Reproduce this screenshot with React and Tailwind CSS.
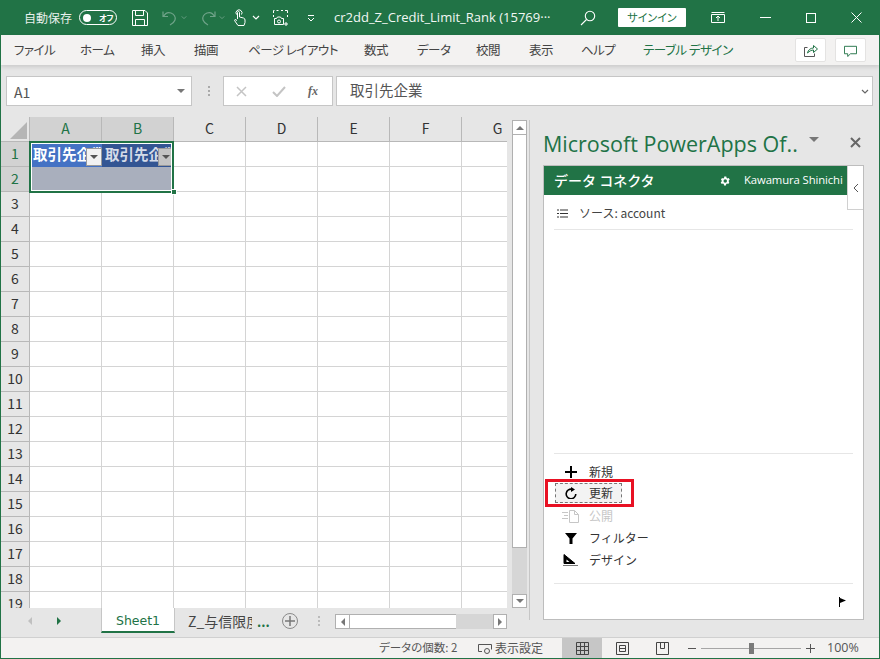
import React from "react"

const tabs = [
  { name: "ファイル", w: "w-[66px]" },
  { name: "ホーム", w: "w-[61px]" },
  { name: "挿入", w: "w-[53px]" },
  { name: "描画", w: "w-[54px]" },
  { name: "ページ レイアウト", w: "w-[116px]" },
  { name: "数式", w: "w-[53px]" },
  { name: "データ", w: "w-[59px]" },
  { name: "校閲", w: "w-[53px]" },
  { name: "表示", w: "w-[52px]" },
  { name: "ヘルプ", w: "w-[62px]" },
]

const cols = ["A", "B", "C", "D", "E", "F", "G"]
const rows = Array.from({ length: 19 }, (_, i) => i + 1)

const Chevron = ({ className = "" }) => (
  <svg viewBox="0 0 8 5" className={`w-2 h-[5px] ${className}`} fill="none" stroke="currentColor" strokeWidth="1.2">
    <path d="M1 1l3 3 3-3" />
  </svg>
)

const TitleBar = () => (
  <div className="h-[35px] shrink-0 bg-[#217346] flex items-center text-white text-[12px]">
    <span className="ml-[23px] w-[55px] text-[#e8f0ec]">自動保存</span>
    <div className="w-[38px] h-[15px] rounded-full border border-white flex items-center pl-[3px]">
      <span className="w-[8px] h-[8px] rounded-full bg-white" />
      <span className="ml-[8px] text-[8px] leading-none font-bold [font-feature-settings:'palt']">オフ</span>
    </div>
    <svg viewBox="0 0 16 16" className="ml-[15px] w-4 h-4" fill="none" stroke="#fff">
      <path d="M.5.5h12.5l2.5 2.5v12.500H.5zM3.500.5v5h8v-5M3.500 15.500v-6h9v6" />
    </svg>
    <svg viewBox="0 0 16 16" className="ml-[14px] w-4 h-4 text-[#6fa389]" fill="none" stroke="currentColor" strokeWidth="1.2">
      <path d="M1 1.500v5h5M1.500 6.500C3 3.500 6 2 9 3c3 1 5 4 4 7s-3 4-5 5" />
    </svg>
    <Chevron className="ml-[3px] text-[#6fa389] w-[6px]" />
    <svg viewBox="0 0 16 16" className="ml-[13px] w-4 h-4 text-[#6fa389]" fill="none" stroke="currentColor" strokeWidth="1.2">
      <path d="M15 1.500v5h-5M14.500 6.500C13 3.500 10 2 7 3 4 4 2 7 3 10s3 4 5 5" />
    </svg>
    <Chevron className="ml-[3px] text-[#6fa389] w-[6px]" />
    <svg viewBox="0 0 12 17" className="ml-[9px] w-3 h-[17px]" fill="none" stroke="#fff" strokeWidth="1">
      <path d="M2.500 5.500a3 3 0 1 1 5 0M3.500 10V3.500a1 1 0 0 1 2 0V8l4 1c1 .3 1.500 1 1.500 2v2.500l-1 3h-6l-3.500-5 .5-1 2 1" />
    </svg>
    <Chevron className="ml-[6px]" />
    <svg viewBox="0 0 16 16" className="ml-[13px] w-4 h-4" fill="none" stroke="#fff">
      <path d="M3.500.5h2M8 .5h2M12 .5h2.500v2.500M14.500 5v2M.5 3V.5h1M.5 5v2" />
      <path d="M1.500 8.500h2l1-1.500h3l1 1.500h2v6h-9z" />
      <circle cx="6" cy="11.500" r="1.500" />
      <path d="M13 12v4M11 14h4" />
    </svg>
    <svg viewBox="0 0 8 8" className="ml-[18px] w-2 h-2" fill="none" stroke="#fff">
      <path d="M1 1.500h6M1 4l3 3 3-3" />
    </svg>
    <span className="ml-[19px] w-[226px] whitespace-nowrap text-[13px] text-[#f2f7f4] [font-family:'Open_Sans','Noto_Sans_CJK_JP',sans-serif]">cr2dd_Z_Credit_Limit_Rank (15769···</span>
    <svg viewBox="0 0 16 16" className="ml-[20px] w-4 h-4" fill="none" stroke="#fff" strokeWidth="1.100">
      <circle cx="10" cy="6" r="4.700" />
      <path d="M6.500 9.500L1 15" />
    </svg>
    <div className="ml-[22px] w-[68px] h-[19px] rounded-[1px] bg-white text-[#217346] flex items-center justify-center text-[11px] [font-feature-settings:'palt']">サインイン</div>
    <svg viewBox="0 0 14 11" className="ml-[25px] w-[14px] h-[11px]" fill="none" stroke="#fff">
      <path d="M.5 2.500h13v8H.5zM.5.500h13M7 9V4.500M5 6l2-2 2 2" />
    </svg>
    <div className="ml-[35px] w-[11px] h-px bg-white" />
    <div className="ml-[35px] w-[10px] h-[10px] border border-white" />
    <svg viewBox="0 0 11 11" className="ml-[35px] w-[11px] h-[11px]" fill="none" stroke="#fff">
      <path d="M.5.500l10 10M10.500.500l-10 10" />
    </svg>
  </div>
)

const RibbonTabs = () => (
  <div className="h-[30px] shrink-0 bg-[#f3f2f1] flex items-center text-[#444] text-[12.500px] tracking-[-0.5px] [font-feature-settings:'palt'] pl-[13px] shadow-[0_2px_4px_rgba(0,0,0,0.12)] relative">
    {tabs.map((t) => (
      <span key={t.name} className={`${t.w} whitespace-nowrap`}>{t.name}</span>
    ))}
    <span className="text-[#217346] w-[152px] whitespace-nowrap">テーブル デザイン</span>
    <div className="w-[31px] h-[24px] rounded-[2px] bg-white border border-[#e4e3e2] flex items-center justify-center">
      <svg viewBox="0 0 14 14" className="w-[14px] h-[14px]" fill="none" stroke="#217346">
        <path d="M3.500 4.500H.5v9h10v-3" stroke="#555" />
        <path d="M3.500 10c.5-3 3-5 6-5V2.500l4 3.500-4 3.500V7c-2 0-4 1-6 3z" />
      </svg>
    </div>
    <div className="ml-[9px] w-[31px] h-[24px] rounded-[2px] bg-white border border-[#e4e3e2] flex items-center justify-center">
      <svg viewBox="0 0 14 14" className="w-[13px] h-[13px]" fill="none" stroke="#217346">
        <path d="M.5 2.500h13v8H7l-3 3v-3H.5z" />
      </svg>
    </div>
  </div>
)

const FormulaBar = () => (
  <div className="h-[52px] shrink-0 bg-[#e6e6e6] flex items-start pt-[11px] pl-[5px]">
    <div className="w-[186px] h-[30px] bg-white border border-[#c6c6c6] flex items-center justify-between pl-[7px] pr-[6px] text-[14px] text-[#555]">
      <span className="pt-[3px]">A1</span>
      <span className="w-0 h-0 border-x-[4px] border-x-transparent border-t-[4px] border-t-[#777]" />
    </div>
    <div className="ml-[15px] w-[3px] h-[30px] flex flex-col justify-center gap-[2px] items-center">
      <span className="w-[2px] h-[2px] bg-[#aaa]" />
      <span className="w-[2px] h-[2px] bg-[#aaa]" />
      <span className="w-[2px] h-[2px] bg-[#aaa]" />
    </div>
    <div className="ml-[13px] w-[110px] h-[30px] bg-white border border-[#c6c6c6] flex items-center pl-[12px]">
      <svg viewBox="0 0 11 11" className="w-[11px] h-[11px]" fill="none" stroke="#c4c4c4" strokeWidth="1.500">
        <path d="M1 1l9 9M10 1l-9 9" />
      </svg>
      <svg viewBox="0 0 14 11" className="ml-[25px] w-[14px] h-[11px]" fill="none" stroke="#c4c4c4" strokeWidth="2">
        <path d="M1 6l4 4 8-9" />
      </svg>
      <span className="ml-[22px] text-[12px] leading-none italic font-bold text-[#666] [font-family:'Liberation_Serif',serif]">fx</span>
    </div>
    <div className="ml-[3px] w-[537px] h-[30px] bg-white border border-[#c6c6c6] flex items-center justify-between pl-[13px] pr-[3px] text-[14.500px] text-[#555]">
      <span className="pb-[3px]">取引先企業</span>
      <Chevron className="text-[#666]" />
    </div>
  </div>
)

const HeaderCell = ({ fill, color, button }) => (
  <div className={`${fill} ${color} flex items-center pl-[3px] pb-[2px] overflow-hidden font-bold text-[14.500px] whitespace-nowrap relative`}>
    取引先企業
    <span className={`absolute right-0 bottom-px w-[16px] h-[18px] ${button} border border-[#9a9a9a] flex items-center justify-center`}>
      <span className="w-0 h-0 border-x-[4px] border-x-transparent border-t-[4px] border-t-[#555]" />
    </span>
  </div>
)

const Sheet = () => (
  <div className="relative w-[506px] h-[491px] overflow-hidden bg-white">
    <div className="grid grid-cols-[29px_repeat(7,72px)] grid-rows-[25px] auto-rows-[25px] w-[533px] text-[#444]">
      <div className="bg-[#e6e6e6] border-r border-b border-[#b8b8b8] flex items-end justify-end p-[2px]">
        <span className="w-0 h-0 border-l-[17px] border-l-transparent border-b-[17px] border-b-[#b5b5b5]" />
      </div>
      {cols.map((c, i) => (
        <div
          key={c}
          className={`border-r border-b border-[#b8b8b8] flex items-center justify-center pb-px text-[14px] ${i < 2 ? "bg-[#d2d2d2] text-[#217346]" : "bg-[#e6e6e6] text-[#333]"}`}
        >
          {c}
        </div>
      ))}
      {rows.map((r) => (
        <React.Fragment key={r}>
          <div className={`border-r border-b border-[#b8b8b8] flex items-center justify-center pb-px text-[14px] ${r < 3 ? "bg-[#d2d2d2] text-[#217346]" : "bg-[#e6e6e6] text-[#333]"}`}>
            {r}
          </div>
          {cols.map((c, i) => {
            if (r === 1 && i === 0) {
              return <HeaderCell key={c} fill="bg-[#4472c4]" color="text-white" button="bg-[#f2f2f2]" />
            }
            if (r === 1 && i === 1) {
              return <HeaderCell key={c} fill="bg-[#335593]" color="text-[#d5dbe8]" button="bg-[#c4c4c4]" />
            }
            if (r === 2 && i < 2) {
              return <div key={c} className="bg-[#a9afbd]" />
            }
            return <div key={c} className="border-r border-b border-[#d4d4d4]" />
          })}
        </React.Fragment>
      ))}
    </div>
    <div className="absolute left-[28px] top-[24px] w-[145px] h-[52px] border-2 border-[#217346] pointer-events-none">
      <div className="w-full h-full border border-white" />
    </div>
    <div className="absolute left-[170px] top-[72px] w-[6px] h-[6px] bg-[#217346] border border-white" />
  </div>
)

const VerticalScroll = () => (
  <div className="ml-[5px] mt-[3px] w-[15px] h-[488px] flex flex-col bg-[#d6d6d6]">
    <div className="h-[15px] bg-white border border-[#b0b0b0] flex items-center justify-center">
      <span className="w-0 h-0 border-x-[4px] border-x-transparent border-b-[4px] border-b-[#777]" />
    </div>
    <div className="h-[413px] bg-white border-x border-b border-[#b0b0b0]" />
    <div className="flex-1" />
    <div className="h-[14px] bg-white border border-[#b0b0b0] flex items-center justify-center">
      <span className="w-0 h-0 border-x-[4px] border-x-transparent border-t-[4px] border-t-[#777]" />
    </div>
  </div>
)

const SheetTabs = () => (
  <div className="h-[28px] flex items-start bg-[#e6e6e6] text-[14px]">
    <div className="w-[100px] h-[25px] flex items-center pl-[27px]">
      <span className="w-0 h-0 border-y-[4px] border-y-transparent border-r-[4px] border-r-[#c0c0c0]" />
      <span className="ml-[25px] w-0 h-0 border-y-[4px] border-y-transparent border-l-[4px] border-l-[#217346]" />
    </div>
    <div className="w-[74px] h-[25px] pt-[4px] bg-white border-b-2 border-[#217346] border-x border-x-[#c6c6c6] flex items-center justify-center text-[#217346] [font-family:'DejaVu_Sans','Noto_Sans_CJK_JP',sans-serif] text-[12.500px]">Sheet1</div>
    <div className="ml-[13px] w-[64px] h-[25px] pt-[2px] flex items-center text-[#444] whitespace-nowrap overflow-hidden">Z_与信限度</div>
    <span className="ml-[5px] w-[13px] h-[25px] pt-[2px] flex items-center text-[#217346] font-bold text-[13px] leading-none">...</span>
    <div className="ml-[12px] mt-[5px] w-[16px] h-[16px] rounded-full border border-[#8a8a8a] flex items-center justify-center text-[#777]">
      <svg viewBox="0 0 10 10" className="w-[10px] h-[10px]" stroke="currentColor" strokeWidth="1.500">
        <path d="M5 0v10M0 5h10" />
      </svg>
    </div>
    <div className="ml-[20px] h-[25px] flex flex-col justify-center gap-[2px]">
      <span className="w-[2px] h-[2px] bg-[#bbb]" />
      <span className="w-[2px] h-[2px] bg-[#bbb]" />
      <span className="w-[2px] h-[2px] bg-[#bbb]" />
    </div>
    <div className="ml-[15px] mt-[6px] w-[172px] h-[15px] flex bg-[#d6d6d6]">
      <div className="w-[15px] bg-white border border-[#b0b0b0] flex items-center justify-center">
        <span className="w-0 h-0 border-y-[4px] border-y-transparent border-r-[4px] border-r-[#777]" />
      </div>
      <div className="w-[106px] bg-white border-y border-[#b0b0b0]" />
      <div className="flex-1" />
      <div className="w-[14px] bg-white border border-[#b0b0b0] flex items-center justify-center">
        <span className="w-0 h-0 border-y-[4px] border-y-transparent border-l-[4px] border-l-[#777]" />
      </div>
    </div>
  </div>
)

const ActionRow = ({ icon, label, className = "h-[22px]" }) => (
  <div className={`flex items-center ${className}`}>
    <span className="w-[31px] flex justify-center">{icon}</span>
    <span className="ml-[3px]">{label}</span>
  </div>
)

const TaskPane = () => (
  <div className="w-[350px] h-[500px] border-l border-[#c6c6c6] mt-[3px] pl-[13px] -mb-[2px] flex flex-col">
    <div className="h-[45px] shrink-0 flex items-start pt-[10px] w-[321px]">
      <span className="text-[#217346] text-[21.500px] leading-[28px] whitespace-nowrap [font-family:'Open_Sans',sans-serif] w-[264px]">Microsoft PowerApps Of..</span>
      <span className="ml-[2px] mt-[7px] w-0 h-0 border-x-[5px] border-x-transparent border-t-[5px] border-t-[#777]" />
      <svg viewBox="0 0 11 11" className="ml-[31px] mt-[7px] w-[11px] h-[11px]" fill="none" stroke="#666" strokeWidth="2">
        <path d="M1 1l9 9M10 1l-9 9" />
      </svg>
    </div>
    <div className="w-[321px] h-[455px] bg-white border border-[#bdbdbd] flex flex-col relative">
      <div className="h-[29px] shrink-0 w-[304px] bg-[#217346] flex items-center text-white">
        <span className="ml-[10px] w-[165px] text-[14px] font-medium">データ コネクタ</span>
        <svg viewBox="0 0 24 24" className="w-3 h-3" fill="#fff">
          <path d="M19.400 13a7.500 7.500 0 0 0 0-2l2.100-1.600-2-3.500-2.500 1a7.500 7.500 0 0 0-1.700-1L14.500 3h-4l-.4 2.900a7.500 7.500 0 0 0-1.700 1l-2.500-1-2 3.500L5.500 11a7.500 7.500 0 0 0 0 2l-2.100 1.600 2 3.500 2.500-1a7.500 7.500 0 0 0 1.700 1l.4 2.900h4l.4-2.900a7.500 7.500 0 0 0 1.700-1l2.500 1 2-3.500zM12.500 15.500a3.500 3.500 0 1 1 0-7 3.500 3.500 0 0 1 0 7z" />
        </svg>
        <span className="ml-[13px] text-[11.300px] tracking-[-0.1px] whitespace-nowrap [font-family:'Open_Sans',sans-serif]">Kawamura Shinichi</span>
      </div>
      <div className="absolute right-0 top-0 w-[16px] h-[44px] border-l border-b border-[#d0d0d0] bg-white flex items-center justify-center">
        <svg viewBox="0 0 6 10" className="w-[6px] h-[10px]" fill="none" stroke="#555">
          <path d="M5 1L1 5l4 4" />
        </svg>
      </div>
      <div className="mx-[10px] h-[35px] pt-[2px] shrink-0 border-b border-[#e6e6e6] flex items-center text-[12px] text-[#444]">
        <svg viewBox="0 0 11 9" className="ml-[3px] w-[11px] h-[9px]" stroke="#333">
          <path d="M0 1h2M3 1h8M0 4.500h2M3 4.500h8M0 8h2M3 8h8" />
        </svg>
        <span className="ml-[11px]">ソース: account</span>
      </div>
      <div className="mx-[10px] h-[224px] shrink-0 border-b border-[#e6e6e6]" />
      <div className="mx-[10px] pt-[7px] pl-px h-[130px] shrink-0 border-b border-[#e6e6e6] text-[12px] text-[#333] relative">
        <ActionRow
          label="新規"
          icon={<svg viewBox="0 0 12 12" className="w-3 h-3" stroke="#000" strokeWidth="2"><path d="M6 0v12M0 6h12" /></svg>}
        />
        <ActionRow
          label="更新"
          className="h-[20px] mb-[2px] bg-[#f3f3f3] outline-1 outline-dashed outline-[#777] -outline-offset-1 w-[67px]"
          icon={
            <svg viewBox="0 0 12 12" className="w-3 h-3" fill="none">
              <path d="M10.800 7a4.800 4.800 0 1 1-3.600-4.700" stroke="#000" strokeWidth="1.600" />
              <path d="M6 0v5l4-2.500z" fill="#000" />
            </svg>
          }
        />
        <ActionRow
          label="公開"
          className="h-[22px] text-[#c6c6c6]"
          icon={<svg viewBox="0 0 17 13" className="w-[17px] h-[13px]" fill="none" stroke="#c6c6c6"><path d="M0 2.500h6M2 5.500h4M0 8.500h6M7.500.5h5l4 4v8h-9zM12.500.5v4h4" /></svg>}
        />
        <ActionRow
          label="フィルター"
          icon={<svg viewBox="0 0 12 12" className="w-3 h-3" fill="#000"><path d="M0 1h12L7.500 6.500V12h-3V6.500z" /></svg>}
        />
        <ActionRow
          label="デザイン"
          icon={<svg viewBox="0 0 15 12" className="w-[15px] h-3" fill="none" stroke="#000"><path d="M1 .5v9h11z" fill="#000" /><path d="M3.500 5.500v2.500h3z" fill="#fff" stroke="none" /><path d="M0 11.500h15" stroke="#777" /></svg>}
        />
        <div className="absolute left-[-9px] top-[25px] w-[89px] h-[28px] border-[3px] border-[#e81123] pointer-events-none" />
      </div>
      <div className="mx-[10px] flex-1 flex justify-end items-start pt-[13px] pr-[7px]">
        <svg viewBox="0 0 7 10" className="w-[7px] h-[10px]">
          <path d="M.5 0v10" stroke="#000" />
          <path d="M1 1l6 2.500L1 6z" fill="#000" />
        </svg>
      </div>
    </div>
  </div>
)

const StatusBar = () => (
  <div className="h-[21px] shrink-0 bg-[#f3f2f1] border-t border-[#d0d0d0] flex items-center text-[11.500px] text-[#555] [font-feature-settings:'palt']">
    <span className="ml-[378px] w-[99px] whitespace-nowrap">データの個数: 2</span>
    <svg viewBox="0 0 14 13" className="w-[14px] h-[13px]" fill="none" stroke="#555">
      <path d="M4 9.500H.5v-7h13v5" />
      <circle cx="9" cy="9" r="2.500" />
    </svg>
    <span className="ml-[3px] w-[67px] text-[12px] whitespace-nowrap">表示設定</span>
    <div className="w-[40px] h-[20px] bg-[#c6c6c6] flex items-center justify-center">
      <svg viewBox="0 0 13 13" className="w-[13px] h-[13px]" fill="none" stroke="#444"><path d="M.5.5h12v12H.5zM.5 4.500h12M.5 8.500h12M4.500.5v12M8.500.5v12" /></svg>
    </div>
    <div className="w-[40px] flex justify-center">
      <svg viewBox="0 0 13 13" className="w-[13px] h-[13px]" fill="none" stroke="#444"><path d="M.5.5h12v12H.5zM3.500 3.500h6v6h-6zM3.500 6.500h6" /></svg>
    </div>
    <div className="w-[40px] flex justify-center">
      <svg viewBox="0 0 13 13" className="w-[13px] h-[13px]" fill="none" stroke="#444"><path d="M.5.5h12v12H.5zM4.500.5v6h4v-6" /></svg>
    </div>
    <div className="ml-[6px] w-[8px] h-px bg-[#555]" />
    <div className="ml-[5px] w-[100px] h-px bg-[#a6a6a6] relative">
      <span className="absolute left-[48px] -top-[5px] w-[5px] h-[11px] bg-[#7a7a7a]" />
    </div>
    <svg viewBox="0 0 9 9" className="ml-[5px] w-[9px] h-[9px]" stroke="#555"><path d="M4.500 0v9M0 4.500h9" /></svg>
    <span className="ml-[12px] text-[12.500px] [font-family:'Open_Sans',sans-serif]">100%</span>
  </div>
)

const App = () => {
  return (
    <div className="w-[880px] h-[659px] flex flex-col border-x border-b border-[#217346] overflow-hidden bg-[#e6e6e6] [font-family:'Noto_Sans_CJK_JP','Noto_Sans',sans-serif]">
      <TitleBar />
      <RibbonTabs />
      <FormulaBar />
      <div className="flex-1 flex min-h-0">
        <div className="flex flex-col w-[528px] shrink-0">
          <div className="flex">
            <Sheet />
            <VerticalScroll />
          </div>
          <SheetTabs />
        </div>
        <TaskPane />
      </div>
      <StatusBar />
    </div>
  )
}

export default App
